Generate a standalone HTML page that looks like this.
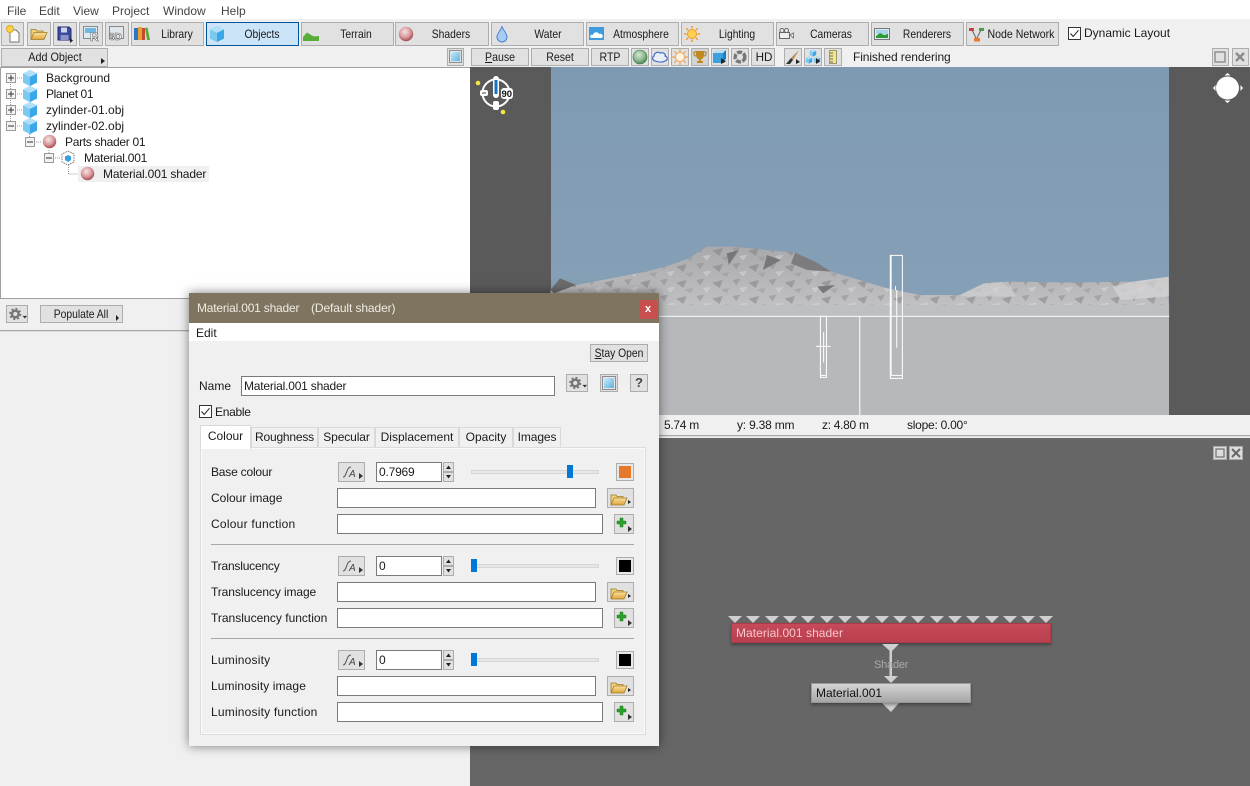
<!DOCTYPE html>
<html><head><meta charset="utf-8"><title>Terragen</title>
<style>
html,body{margin:0;padding:0;width:1250px;height:786px;overflow:hidden;background:#f0f0f0}
body{position:relative;font:12px "Liberation Sans",sans-serif;color:#1a1a1a}
.a,.t,.b,.i,.w{position:absolute;box-sizing:border-box}
.t{white-space:nowrap;line-height:16px}
.c{position:absolute;white-space:nowrap;line-height:16px;transform:translateX(-50%) scaleX(.86)}
.b{background:#e1e1e1;border:1px solid #adadad;text-align:center;white-space:nowrap;line-height:18px}
.tb{top:22px;height:24px;line-height:22px}
.w{background:#fff;border:1px solid #7a7a7a;line-height:18px;padding-left:2px;white-space:nowrap}
.i{overflow:visible}
.ar{position:absolute;width:0;height:0;border-left:4px solid #222;border-top:3px solid transparent;border-bottom:3px solid transparent}
.tab{position:absolute;top:427px;height:20px;box-sizing:border-box;background:#f0f0f0;border:1px solid #d9d9d9;border-bottom:0;text-align:center;line-height:19px}
.tri{position:absolute;top:616px;width:0;height:0;border-left:7px solid transparent;border-right:7px solid transparent;border-top:7px solid #cfcfcf}
</style></head><body>
<svg width="0" height="0" style="position:absolute">
<defs>
<radialGradient id="rs" cx=".42" cy=".35" r=".7"><stop offset="0" stop-color="#f6e4e4"/><stop offset=".55" stop-color="#d99a9c"/><stop offset="1" stop-color="#9c3f44"/></radialGradient>
<radialGradient id="gr" cx=".42" cy=".35" r=".7"><stop offset="0" stop-color="#d5e8d5"/><stop offset=".6" stop-color="#8ab58d"/><stop offset="1" stop-color="#3e7a45"/></radialGradient>
<linearGradient id="gs" x1="0" y1="0" x2="1" y2="1"><stop offset="0" stop-color="#c9eafa"/><stop offset="1" stop-color="#5fb2e0"/></linearGradient>
<linearGradient id="fo" x1="0" y1="0" x2="0" y2="1"><stop offset="0" stop-color="#fbe3a0"/><stop offset="1" stop-color="#dda436"/></linearGradient>
<linearGradient id="mt" gradientUnits="userSpaceOnUse" x1="0" y1="50" x2="0" y2="258"><stop offset="0" stop-color="#a9a9ab"/><stop offset=".55" stop-color="#b8b8ba"/><stop offset="1" stop-color="#c4c5c7"/></linearGradient>
<pattern id="tx" patternUnits="userSpaceOnUse" width="90" height="48">
<path d="M4 6L24 2L14 22Z" fill="#8a8a8c" opacity=".5"/><path d="M44 14L70 6L62 30Z" fill="#77777a" opacity=".45"/><path d="M20 30L42 26L30 44Z" fill="#dadadc" opacity=".5"/><path d="M66 34L86 30L80 46Z" fill="#8e8e90" opacity=".4"/>
</pattern>
<symbol id="cube" viewBox="0 0 16 18"><path d="M8 1L15 4.500V13.500L8 17L1 13.500V4.500Z" fill="#5bb6ea"/><path d="M8 1L15 4.500L8 8L1 4.500Z" fill="#aee0f7"/><path d="M1 4.500L8 8V17L1 13.500Z" fill="#7cc9f0"/><path d="M8 8L15 4.500V13.500L8 17Z" fill="#3aa8e8"/></symbol>
<symbol id="sph" viewBox="0 0 16 16"><circle cx="8" cy="8" r="7.200" fill="url(#rs)"/></symbol>
<symbol id="folder" viewBox="0 0 18 14"><path d="M1 13V3H6L7 4.500H13V6" fill="#f2d27a" stroke="#9a7a2c" stroke-width=".8"/><path d="M1 13L4 6H17L14 13Z" fill="url(#fo)" stroke="#a07c28" stroke-width=".8"/></symbol>
<symbol id="prev" viewBox="0 0 14 14"><rect x=".5" y=".5" width="13" height="13" fill="#e8e8e8" stroke="#8a8a8a"/><rect x="2" y="2" width="10" height="10" fill="url(#gs)"/></symbol>
<symbol id="gear" viewBox="0 0 22 14"><circle cx="8" cy="7" r="3.700" fill="none" stroke="#757575" stroke-width="2.600"/><circle cx="8" cy="7" r="5.700" fill="none" stroke="#757575" stroke-width="2" stroke-dasharray="2.200 2.280"/><path d="M16 9h5l-2.500 3z" fill="#333"/></symbol>
<symbol id="fn" viewBox="0 0 27 20"><path d="M5 15C9 15 8 5 13 5" fill="none" stroke="#555" stroke-width="1"/><text x="11" y="15" font-family="Liberation Sans" font-style="italic" font-size="10" fill="#444">A</text><path d="M21 11l4 3-4 3z" fill="#333"/></symbol>
<symbol id="plus" viewBox="0 0 20 20"><path d="M6 4h3v3h3v3H9v3H6v-3H3V7h3z" fill="#2aa02a" stroke="#1b7d1b" stroke-width=".5"/><path d="M14 12l4 3-4 3z" fill="#333"/></symbol>
</defs></svg>

<!-- menu -->
<div class="a" style="left:0;top:0;width:1250px;height:19px;background:#fff"></div>
<div class="t" style="left:7px;top:3px;color:#444">File</div>
<div class="t" style="left:39px;top:3px;color:#444">Edit</div>
<div class="t" style="left:73px;top:3px;color:#444">View</div>
<div class="t" style="left:112px;top:3px;color:#444">Project</div>
<div class="t" style="left:163px;top:3px;color:#444">Window</div>
<div class="t" style="left:221px;top:3px;color:#444">Help</div>

<!-- toolbar -->
<div class="a" style="left:0;top:19px;width:1250px;height:49px;background:#f0f0f0"></div>
<div class="b tb" style="left:1px;width:23px"></div>
<svg class="i" style="left:5px;top:24px" width="16" height="20" viewBox="0 0 16 20"><path d="M5 6h6l3 3v9H5z" fill="#fff" stroke="#777"/><circle cx="5" cy="5" r="3.500" fill="#f8d64a" stroke="#e8a020"/></svg>
<div class="b tb" style="left:27px;width:24px"></div>
<svg class="i" style="left:30px;top:26px" width="18" height="15"><use href="#folder"/></svg>
<div class="b tb" style="left:53px;width:24px"></div>
<svg class="i" style="left:57px;top:26px" width="17" height="17" viewBox="0 0 17 17"><path d="M1 1h11l2 2v11H1z" fill="#3a4a9e" stroke="#232c6e"/><rect x="4" y="1.500" width="6" height="5" fill="#cfd4ee"/><rect x="3.500" y="9" width="8" height="5" fill="#8c93c8"/><path d="M13 12l3 2.500-3 2.500z" fill="#222"/></svg>
<div class="b tb" style="left:79px;width:24px"></div>
<svg class="i" style="left:83px;top:26px" width="17" height="16" viewBox="0 0 17 16"><rect x=".5" y=".5" width="14" height="12" fill="#dfeaf3" stroke="#8a8a8a"/><rect x="2" y="2" width="11" height="5" fill="#6eb7e2"/><text x="7" y="15" font-family="Liberation Sans" font-weight="bold" font-size="12" fill="#fff" stroke="#666" stroke-width=".6">R</text></svg>
<div class="b tb" style="left:105px;width:24px"></div>
<svg class="i" style="left:108px;top:26px" width="18" height="16" viewBox="0 0 18 16"><rect x="1.500" y=".5" width="14" height="12" fill="#dfe6ec" stroke="#8a8a8a"/><text x="1" y="14" font-family="Liberation Sans" font-weight="bold" font-size="10" fill="#fff" stroke="#666" stroke-width=".6">3D</text></svg>
<div class="b tb" style="left:131px;width:73px"></div><div class="c" style="left:177px;top:26px">Library</div>
<svg class="i" style="left:134px;top:26px" width="16" height="16" viewBox="0 0 16 16"><rect x="0" y="2" width="4" height="12" fill="#2e74c0"/><rect x="4" y="1" width="4" height="13" fill="#e8a030"/><rect x="8" y="2" width="3" height="12" fill="#c84830"/><path d="M11 2l2.500-.5L16 14h-3z" fill="#58a838"/></svg>
<div class="b tb" style="left:206px;width:93px;background:#cce4f7;border-color:#005499"></div><div class="c" style="left:261.500px;top:26px">Objects</div>
<svg class="i" style="left:209px;top:25px" width="16" height="18"><use href="#cube"/></svg>
<div class="b tb" style="left:301px;width:93px"></div><div class="c" style="left:356px;top:26px">Terrain</div>
<svg class="i" style="left:303px;top:30px" width="16" height="12" viewBox="0 0 16 12"><path d="M0 7L4 2.500L8 5L11 6.500L16 6V11H0Z" fill="#58ac3a"/></svg>
<div class="b tb" style="left:395px;width:94px"></div><div class="c" style="left:451px;top:26px">Shaders</div>
<svg class="i" style="left:398px;top:26px" width="16" height="16"><use href="#sph"/></svg>
<div class="b tb" style="left:491px;width:93px"></div><div class="c" style="left:547.500px;top:26px">Water</div>
<svg class="i" style="left:496px;top:25px" width="12" height="18" viewBox="0 0 12 18"><path d="M6 1C6 4 1 8 1 12a5 5 0 0 0 10 0C11 8 6 4 6 1Z" fill="#a9cdf2" stroke="#4a80d0"/></svg>
<div class="b tb" style="left:586px;width:93px"></div><div class="c" style="left:640.500px;top:26px">Atmosphere</div>
<svg class="i" style="left:589px;top:27px" width="15" height="13" viewBox="0 0 15 13"><rect width="15" height="13" fill="#3f9be0"/><path d="M2 11c-2-2 0-4 2-3 0-3 5-4 6-1 3-1 5 2 3 4z" fill="#fff"/></svg>
<div class="b tb" style="left:681px;width:93px"></div><div class="c" style="left:737px;top:26px">Lighting</div>
<svg class="i" style="left:684px;top:26px" width="16" height="16" viewBox="0 0 16 16"><circle cx="8" cy="8" r="4.500" fill="#fbd055" stroke="#f09a30"/><path d="M8 0v2.500M8 13.500V16M0 8h2.500M13.500 8H16M2.300 2.300l1.800 1.800M11.900 11.900l1.800 1.800M2.300 13.700l1.800-1.800M11.900 4.100l1.800-1.800" stroke="#f09a30" stroke-width="1.500"/></svg>
<div class="b tb" style="left:776px;width:93px"></div><div class="c" style="left:831px;top:26px">Cameras</div>
<svg class="i" style="left:779px;top:28px" width="15" height="11" viewBox="0 0 15 11"><rect x=".5" y="4.500" width="10" height="6" fill="#eee" stroke="#666"/><circle cx="3" cy="2.500" r="2" fill="#eee" stroke="#666"/><circle cx="7.500" cy="2.500" r="2" fill="#eee" stroke="#666"/><path d="M11 7l3.500-2v5z" fill="#eee" stroke="#666" stroke-width=".8"/></svg>
<div class="b tb" style="left:871px;width:93px"></div><div class="c" style="left:927px;top:26px">Renderers</div>
<svg class="i" style="left:874px;top:28px" width="16" height="12" viewBox="0 0 16 12"><rect x=".5" y=".5" width="15" height="11" fill="#d9ecf5" stroke="#777"/><rect x="2" y="2" width="12" height="4" fill="#a8d4ea"/><path d="M2 8L6 5L10 7L14 6V10H2Z" fill="#2e9a34"/></svg>
<div class="b tb" style="left:966px;width:93px"></div><div class="c" style="left:1021px;top:26px;transform:translateX(-50%) scaleX(.88)">Node Network</div>
<svg class="i" style="left:969px;top:27px" width="15" height="15" viewBox="0 0 15 15"><path d="M3 3L7 11M12 3L8 11" stroke="#666"/><rect x="0" y="1" width="5" height="3" fill="#c84040"/><rect x="10" y="1" width="5" height="3" fill="#4a9a4a"/><rect x="5" y="11" width="6" height="3.500" fill="#e87a30"/></svg>
<div class="a" style="left:1068px;top:27px;width:13px;height:13px;border:1px solid #333;background:#fff;box-sizing:border-box"></div>
<svg class="i" style="left:1068px;top:27px" width="13" height="13"><path d="M2.500 6.500L5.200 9.500L10.500 3.200" fill="none" stroke="#222"/></svg>
<div class="t" style="left:1084px;top:25px">Dynamic Layout</div>

<!-- row 2 -->
<div class="b" style="left:1px;top:48px;width:107px;height:19px"></div><div class="c" style="left:54.500px;top:49px;transform:translateX(-50%) scaleX(.9)">Add Object</div>
<div class="ar" style="left:101px;top:58px"></div>
<div class="b" style="left:447px;top:48px;width:17px;height:18px"></div>
<svg class="i" style="left:449px;top:50px" width="13" height="13"><use href="#prev"/></svg>
<div class="b" style="left:471px;top:48px;width:58px;height:18px"></div><div class="c" style="left:500px;top:49px;transform:translateX(-50%) scaleX(.88)"><u>P</u>ause</div>
<div class="b" style="left:531px;top:48px;width:58px;height:18px"></div><div class="c" style="left:560px;top:49px;transform:translateX(-50%) scaleX(.88)">Reset</div>
<div class="b" style="left:591px;top:48px;width:38px;height:18px"></div><div class="c" style="left:610px;top:49px;transform:translateX(-50%) scaleX(.88)">RTP</div>
<div class="b" style="left:631px;top:48px;width:18px;height:18px"></div>
<svg class="i" style="left:632px;top:49px" width="16" height="16"><circle cx="8" cy="8" r="7" fill="url(#gr)" stroke="#3b7a46" stroke-width=".6"/></svg>
<div class="b" style="left:651px;top:48px;width:18px;height:18px"></div>
<svg class="i" style="left:652px;top:50px" width="16" height="14" viewBox="0 0 16 14"><path d="M3 11C0 10 0 7 2 6C2 3 6 1 8 3C11 2 14 4 13 6C16 7 16 10 13 11C10 13 6 12 3 11Z" fill="#e8eefa" stroke="#3a60c8" stroke-width="1.100"/></svg>
<div class="b" style="left:671px;top:48px;width:18px;height:18px"></div>
<svg class="i" style="left:672px;top:49px" width="16" height="16" viewBox="0 0 16 16"><circle cx="8" cy="8" r="4.500" fill="#fff3e4" stroke="#f0a050"/><path d="M8 0v3M8 13v3M0 8h3M13 8h3M2.300 2.300l2 2M11.700 11.700l2 2M2.300 13.700l2-2M11.700 4.300l2-2" stroke="#f0a050" stroke-width="1.200"/></svg>
<div class="b" style="left:691px;top:48px;width:18px;height:18px;background:#d4d4d4"></div>
<svg class="i" style="left:693px;top:50px" width="14" height="14" viewBox="0 0 14 14"><path d="M3 1h8v4c0 3-2 4-3 4.500V11h2v2H4v-2h2V9.500C5 9 3 8 3 5z" fill="#c08a20"/><path d="M3 2H1v2c0 1 1 2 2 2M11 2h2v2c0 1-1 2-2 2" fill="none" stroke="#a87818"/></svg>
<div class="b" style="left:711px;top:48px;width:18px;height:18px"></div>
<svg class="i" style="left:712px;top:49px" width="15" height="15" viewBox="0 0 15 15"><rect x="1" y="4" width="10" height="10" fill="#3aa0e0"/><path d="M1 4l3-3h10l-3 3z" fill="#b6e0f6"/><path d="M11 4l3-3v9l-3 3z" fill="#1e7cc0"/><path d="M9 9l5 3.500-5 2.500z" fill="#222"/></svg>
<div class="b" style="left:731px;top:48px;width:18px;height:18px"></div>
<svg class="i" style="left:733px;top:50px" width="14" height="14" viewBox="0 0 14 14"><circle cx="7" cy="7" r="4.800" fill="none" stroke="#777" stroke-width="3.400" stroke-dasharray="5 1.500"/></svg>
<div class="b" style="left:751px;top:48px;width:24px;height:18px"></div><div class="c" style="left:763.500px;top:49px;transform:translateX(-50%) scaleX(.97)">HD</div>
<div class="b" style="left:784px;top:48px;width:18px;height:18px"></div>
<svg class="i" style="left:785px;top:49px" width="16" height="16" viewBox="0 0 16 16"><path d="M14 1L6 9l2 2z" fill="#b88a50"/><path d="M6 9l2 2-3 4-4 0z" fill="#333"/><path d="M11 10l4 3-4 2z" fill="#222"/></svg>
<div class="b" style="left:804px;top:48px;width:18px;height:18px"></div>
<svg class="i" style="left:805px;top:49px" width="16" height="16"><use href="#cube" x="4" y="0" width="8" height="8"/><use href="#cube" x="0" y="7" width="8" height="8"/><use href="#cube" x="8" y="7" width="8" height="8"/><path d="M11 9l4 3-4 3z" fill="#222"/></svg>
<div class="b" style="left:824px;top:48px;width:18px;height:18px"></div>
<svg class="i" style="left:829px;top:50px" width="8" height="14" viewBox="0 0 8 14"><rect x=".5" y=".5" width="7" height="13" fill="#f4e58a" stroke="#9a9a70"/><path d="M1 3h3M1 6h3M1 9h3M1 12h3" stroke="#666"/></svg>
<div class="t" style="left:853px;top:49px;letter-spacing:-.1px">Finished rendering</div>
<div class="b" style="left:1212px;top:48px;width:17px;height:18px"></div>
<svg class="i" style="left:1214px;top:51px" width="12" height="12"><rect x="1" y="1" width="10" height="10" fill="none" stroke="#8a8a8a" stroke-width="1.400"/></svg>
<div class="b" style="left:1232px;top:48px;width:17px;height:18px"></div>
<svg class="i" style="left:1234px;top:51px" width="12" height="12"><path d="M2 2L10 10M10 2L2 10" stroke="#8a8a8a" stroke-width="2.400"/></svg>

<!-- tree -->
<div class="a" style="left:0;top:67px;width:470px;height:232px;background:#fff;border:1px solid #a0a0a0;border-right:0;box-sizing:border-box"></div>
<svg class="i" style="left:0;top:68px" width="100" height="110">
<path d="M10.500 16V58M15 10H22M15 26H22M15 42H22M15 58H22M29.500 66V74M34 74H42M49 82V90M53 90H61M68.500 97V106M68.500 106H80" stroke="#999" stroke-dasharray="1 1" fill="none"/>
</svg>
<svg class="i" style="left:6px;top:73px" width="50" height="70" fill="#f2f2f2" stroke="#999">
<rect x=".5" y=".5" width="9" height="9"/><path d="M2 5H8M5 2V8" stroke="#333"/>
<rect x=".5" y="16.500" width="9" height="9"/><path d="M2 21H8M5 18V24" stroke="#333"/>
<rect x=".5" y="32.500" width="9" height="9"/><path d="M2 37H8M5 34V40" stroke="#333"/>
<rect x=".5" y="48.500" width="9" height="9"/><path d="M2 53H8" stroke="#333"/>
<rect x="19.500" y="64.500" width="9" height="9"/><path d="M21 69H27" stroke="#333"/>
<rect x="38.500" y="80.500" width="9" height="9"/><path d="M40 85H46" stroke="#333"/>
</svg>
<svg class="i" style="left:22px;top:69px" width="16" height="18"><use href="#cube"/></svg>
<svg class="i" style="left:22px;top:85px" width="16" height="18"><use href="#cube"/></svg>
<svg class="i" style="left:22px;top:101px" width="16" height="18"><use href="#cube"/></svg>
<svg class="i" style="left:22px;top:117px" width="16" height="18"><use href="#cube"/></svg>
<svg class="i" style="left:42px;top:134px" width="15" height="15"><use href="#sph"/></svg>
<svg class="i" style="left:61px;top:150px" width="14" height="16" viewBox="0 0 14 16"><path d="M7 1L13 4V12L7 15L1 12V4Z" fill="#fff" stroke="#777" stroke-dasharray="1.500 1"/><path d="M7 5L10 6.500V10L7 12L4 10V6.500Z" fill="#36a0de"/></svg>
<div class="a" style="left:78px;top:166px;width:131px;height:16px;background:#f0f0f0"></div>
<svg class="i" style="left:80px;top:166px" width="15" height="15"><use href="#sph"/></svg>
<div class="t" style="left:46px;top:70px">Background</div>
<div class="t" style="left:46px;top:86px;letter-spacing:-.4px">Planet 01</div>
<div class="t" style="left:46px;top:102px">zylinder-01.obj</div>
<div class="t" style="left:46px;top:118px">zylinder-02.obj</div>
<div class="t" style="left:65px;top:134px;letter-spacing:-.3px">Parts shader 01</div>
<div class="t" style="left:84px;top:150px;letter-spacing:-.25px">Material.001</div>
<div class="t" style="left:103px;top:166px;letter-spacing:-.15px">Material.001 shader</div>

<!-- left bottom -->
<div class="b" style="left:6px;top:305px;width:22px;height:18px"></div>
<svg class="i" style="left:8px;top:307px" width="20" height="14"><use href="#gear"/></svg>
<div class="b" style="left:40px;top:305px;width:83px;height:18px"></div><div class="c" style="left:80.500px;top:306px">Populate All</div>
<div class="ar" style="left:116px;top:315px;border-left-width:3px"></div>
<div class="a" style="left:0;top:330px;width:470px;height:2px;border-top:1px solid #a8a8a8;border-bottom:1px solid #dcdcdc;box-sizing:border-box"></div>

<!-- viewport -->
<div class="a" style="left:470px;top:67px;width:780px;height:348px;background:#5a5a5a"></div>
<div class="a" style="left:551px;top:67px;width:618px;height:250px;background:linear-gradient(#7e9ab3,#86a0b6)"></div>
<div class="a" style="left:551px;top:317px;width:618px;height:98px;background:#b7b8bc"></div>
<svg class="i" style="left:550px;top:230px" width="630" height="220" viewBox="0 0 1568 660" preserveAspectRatio="none">
<path d="M1 180L25 150L65 165L130 150L240 125L300 105L345 85L390 50L460 50L540 60L610 68L660 95L700 125L770 150L840 175L920 195L1020 195L1080 160L1140 155L1300 158L1450 155L1540 140V258H1V180Z" fill="url(#mt)"/>
<path d="M1 180L25 150L65 165L130 150L240 125L300 105L345 85L390 50L460 50L540 60L610 68L660 95L700 125L770 150L840 175L920 195L1020 195L1080 160L1140 155L1300 158L1450 155L1540 140V225H1V180Z" fill="url(#tx)"/>
<path d="M1 180L25 145L65 165L10 190Z" fill="#6c6c6c"/>
<path d="M610 68L660 95L700 125L640 120L600 100Z" fill="#7c7c7e"/>
<path d="M540 75L575 90L530 120Z" fill="#77777a"/>
<path d="M440 70L470 60L445 105Z" fill="#77777a"/>
<path d="M665 170L710 165L680 190Z" fill="#77777a"/>
<path d="M1020 195L1080 160L1140 155L1160 200H1040Z" fill="#d2d2d4" opacity=".6"/>
<path d="M1400 170L1450 155L1540 140V200L1420 210Z" fill="#d5d5d7" opacity=".7"/>
<rect x="1" y="225" width="1540" height="33" fill="#bcbdbf" opacity=".75"/>
<g fill="none" stroke="#fff" stroke-width="1">
<path vector-effect="non-scaling-stroke" d="M0 259H1541M771 259V555"/>
<rect vector-effect="non-scaling-stroke" x="673" y="259" width="15" height="183"/><path vector-effect="non-scaling-stroke" d="M673 436H688M681 306V398M662 349H698"/>
<rect vector-effect="non-scaling-stroke" x="847" y="76" width="30" height="369"/><path vector-effect="non-scaling-stroke" d="M849 76V436H877M860 168V180M863 180V353"/>
</g></svg>
<!-- compass left -->
<svg class="i" style="left:476px;top:76px" width="40" height="40" viewBox="0 0 40 40">
<circle cx="2" cy="7" r="2.300" fill="#f4e542"/><circle cx="27" cy="36" r="2.300" fill="#f4e542"/>
<circle cx="20" cy="17" r="13.500" fill="none" stroke="#fff" stroke-width="2"/>
<path d="M20 3V19" stroke="#fff" stroke-width="6" stroke-linecap="round"/><path d="M20 4V18" stroke="#1673c4" stroke-width="3"/>
<rect x="17" y="25" width="6" height="9" rx="2" fill="#fff"/><rect x="4" y="14" width="8" height="6" rx="2" fill="#fff"/><path d="M6 17H10" stroke="#444"/>
<rect x="25" y="12" width="12" height="11" rx="3" fill="#fff"/>
<text x="25.500" y="21" font-family="Liberation Sans" font-size="9.500" font-weight="bold" fill="#111">90</text></svg>
<!-- compass right -->
<svg class="i" style="left:1213px;top:73px" width="30" height="30" viewBox="0 0 30 30"><circle cx="14.500" cy="15" r="11.500" fill="#fff"/><path d="M14.500 0l3 2.500h-6zM14.500 30l3-2.500h-6zM0 15l2.500-3v6zM30 15l-2.500-3v6z" fill="#fff"/></svg>

<!-- status -->
<div class="a" style="left:470px;top:415px;width:780px;height:23px;background:#f0f0f0"></div>
<div class="a" style="left:470px;top:435px;width:780px;height:2px;border-top:1px solid #a8a8a8;border-bottom:1px solid #dcdcdc;box-sizing:border-box"></div>
<div class="t" style="left:664px;top:417px;letter-spacing:-.3px">5.74 m</div>
<div class="t" style="left:737px;top:417px;letter-spacing:-.2px">y: 9.38 mm</div>
<div class="t" style="left:822px;top:417px;letter-spacing:-.3px">z: 4.80 m</div>
<div class="t" style="left:907px;top:417px;letter-spacing:-.25px">slope: 0.00°</div>

<!-- node panel -->
<div class="a" style="left:470px;top:438px;width:780px;height:348px;background:#666"></div>
<div class="a" style="left:1213px;top:446px;width:14px;height:14px;background:#ddd;border:1px solid #aaa;box-sizing:border-box"></div>
<svg class="i" style="left:1215px;top:448px" width="10" height="10"><rect x="1" y="1" width="8" height="8" fill="none" stroke="#777" stroke-width="1.300"/></svg>
<div class="a" style="left:1229px;top:446px;width:14px;height:14px;background:#ddd;border:1px solid #aaa;box-sizing:border-box"></div>
<svg class="i" style="left:1231px;top:448px" width="10" height="10"><path d="M1 1L9 9M9 1L1 9" stroke="#666" stroke-width="2"/></svg>

<div class="tri" style="left:728px"></div><div class="tri" style="left:746px"></div><div class="tri" style="left:765px"></div><div class="tri" style="left:783px"></div><div class="tri" style="left:801px"></div><div class="tri" style="left:820px"></div><div class="tri" style="left:838px"></div><div class="tri" style="left:856px"></div><div class="tri" style="left:875px"></div><div class="tri" style="left:893px"></div><div class="tri" style="left:911px"></div><div class="tri" style="left:930px"></div><div class="tri" style="left:948px"></div><div class="tri" style="left:966px"></div><div class="tri" style="left:985px"></div><div class="tri" style="left:1003px"></div><div class="tri" style="left:1021px"></div><div class="tri" style="left:1039px"></div>
<div class="a" style="left:731px;top:623px;width:320px;height:20px;background:linear-gradient(#c64a59,#b9404e);border:1px solid #a83c48;box-sizing:border-box;box-shadow:0 2px 3px rgba(0,0,0,.35)"></div>
<div class="t" style="left:736px;top:625px;color:#f6c8cc;font-size:12px;letter-spacing:.05px">Material.001 shader</div>
<svg class="i" style="left:881px;top:643px" width="20" height="72" viewBox="0 0 20 72">
<path d="M1 1H18L10 9Z" fill="#cfcfcf"/><rect x="8.500" y="8" width="2.500" height="27" fill="#cfcfcf"/><path d="M3 33H17L10 40Z" fill="#cfcfcf"/><path d="M1 60H18L10 69Z" fill="#cfcfcf"/></svg>
<div class="t" style="left:874px;top:657px;color:#aaa;font-size:11px;letter-spacing:-.2px">Shader</div>
<div class="a" style="left:811px;top:683px;width:160px;height:20px;background:linear-gradient(#d4d4d4,#a6a6a6);border:1px solid #999;box-sizing:border-box;box-shadow:0 2px 3px rgba(0,0,0,.35)"></div>
<div class="t" style="left:816px;top:685px;color:#111">Material.001</div>

<!-- dialog -->
<div class="a" style="left:189px;top:293px;width:470px;height:453px;background:#f0f0f0;box-shadow:0 0 10px rgba(0,0,0,.5)"></div>
<div class="a" style="left:189px;top:293px;width:470px;height:30px;background:#7f745f"></div>
<div class="t" style="left:197px;top:300px;color:#f0ece4;letter-spacing:-.2px">Material.001 shader</div>
<div class="t" style="left:311px;top:300px;color:#f0ece4;letter-spacing:-.1px">(Default shader)</div>
<div class="a" style="left:639px;top:300px;width:18px;height:19px;background:#c84f50;color:#fff;text-align:center;line-height:18px;font-weight:bold;font-size:11px">x</div>
<div class="a" style="left:189px;top:323px;width:470px;height:18px;background:#fff"></div>
<div class="t" style="left:196px;top:325px">Edit</div>
<div class="b" style="left:590px;top:344px;width:58px;height:18px"></div><div class="c" style="left:619px;top:345px"><u>S</u>tay Open</div>
<div class="t" style="left:199px;top:378px">Name</div>
<div class="w" style="left:241px;top:376px;width:314px;height:20px;letter-spacing:-.2px">Material.001 shader</div>
<div class="b" style="left:566px;top:374px;width:22px;height:18px"></div>
<svg class="i" style="left:568px;top:376px" width="20" height="14"><use href="#gear"/></svg>
<div class="b" style="left:600px;top:374px;width:18px;height:18px"></div>
<svg class="i" style="left:602px;top:376px" width="14" height="14"><use href="#prev"/></svg>
<div class="b" style="left:630px;top:374px;width:18px;height:18px;font-weight:bold;line-height:16px;font-size:13px;color:#444">?</div>
<div class="a" style="left:199px;top:405px;width:13px;height:13px;border:1px solid #333;background:#fff;box-sizing:border-box"></div>
<svg class="i" style="left:199px;top:405px" width="13" height="13"><path d="M2.500 6.500L5.200 9.500L10.500 3.200" fill="none" stroke="#222"/></svg>
<div class="t" style="left:215px;top:404px;letter-spacing:-.3px">Enable</div>

<div class="a" style="left:200px;top:447px;width:446px;height:288px;border:1px solid #dcdcdc;box-shadow:inset 0 0 0 1px #fafafa;box-sizing:border-box"></div>
<div class="tab" style="left:251px;width:67px;letter-spacing:-.2px">Roughness</div>
<div class="tab" style="left:318px;width:57px;letter-spacing:-.1px">Specular</div>
<div class="tab" style="left:375px;width:84px">Displacement</div>
<div class="tab" style="left:459px;width:54px">Opacity</div>
<div class="tab" style="left:513px;width:48px;letter-spacing:-.1px">Images</div>
<div class="a" style="left:200px;top:425px;width:51px;height:24px;background:#fff;border:1px solid #d9d9d9;border-bottom:0;box-sizing:border-box;text-align:center;line-height:20px">Colour</div>

<div class="t" style="left:211px;top:464px;letter-spacing:-.2px">Base colour</div>
<div class="b" style="left:338px;top:462px;width:27px;height:20px"></div>
<svg class="i" style="left:338px;top:462px" width="27" height="20"><use href="#fn"/></svg>
<div class="w" style="left:376px;top:462px;width:66px;height:20px;letter-spacing:-.2px">0.7969</div>
<div class="b" style="left:443px;top:462px;width:11px;height:10px"></div><div class="b" style="left:443px;top:472px;width:11px;height:10px"></div>
<svg class="i" style="left:443px;top:462px" width="11" height="20"><path d="M3 7L5.500 3.500L8 7ZM3 13L5.500 16.500L8 13Z" fill="#222"/></svg>
<div class="a" style="left:471px;top:470px;width:128px;height:4px;background:#e7e7e7;border:1px solid #d6d6d6;box-sizing:border-box"></div>
<div class="a" style="left:567px;top:465px;width:6px;height:13px;background:#0078d7"></div>
<div class="b" style="left:616px;top:463px;width:18px;height:18px;background:#e5782a;outline:2px solid #e8e8e8;outline-offset:-3px"></div>
<div class="t" style="left:211px;top:490px">Colour image</div>
<div class="w" style="left:337px;top:488px;width:259px;height:20px"></div>
<div class="b" style="left:607px;top:488px;width:27px;height:20px"></div>
<svg class="i" style="left:610px;top:492px" width="18" height="14"><use href="#folder"/></svg><div class="ar" style="left:628px;top:500px;border-left-width:3px;border-top-width:2.500px;border-bottom-width:2.500px"></div>
<div class="t" style="left:211px;top:516px;letter-spacing:.25px">Colour function</div>
<div class="w" style="left:337px;top:514px;width:266px;height:20px"></div>
<div class="b" style="left:614px;top:514px;width:20px;height:20px"></div>
<svg class="i" style="left:614px;top:514px" width="20" height="20"><use href="#plus"/></svg>
<div class="a" style="left:211px;top:544px;width:423px;height:1px;background:#a8a8a8"></div>

<div class="t" style="left:211px;top:558px;letter-spacing:-.2px">Translucency</div>
<div class="b" style="left:338px;top:556px;width:27px;height:20px"></div>
<svg class="i" style="left:338px;top:556px" width="27" height="20"><use href="#fn"/></svg>
<div class="w" style="left:376px;top:556px;width:66px;height:20px">0</div>
<div class="b" style="left:443px;top:556px;width:11px;height:10px"></div><div class="b" style="left:443px;top:566px;width:11px;height:10px"></div>
<svg class="i" style="left:443px;top:556px" width="11" height="20"><path d="M3 7L5.500 3.500L8 7ZM3 13L5.500 16.500L8 13Z" fill="#222"/></svg>
<div class="a" style="left:471px;top:564px;width:128px;height:4px;background:#e7e7e7;border:1px solid #d6d6d6;box-sizing:border-box"></div>
<div class="a" style="left:471px;top:559px;width:6px;height:13px;background:#0078d7"></div>
<div class="b" style="left:616px;top:557px;width:18px;height:18px;background:#000;outline:2px solid #e8e8e8;outline-offset:-3px"></div>
<div class="t" style="left:211px;top:584px;letter-spacing:-.1px">Translucency image</div>
<div class="w" style="left:337px;top:582px;width:259px;height:20px"></div>
<div class="b" style="left:607px;top:582px;width:27px;height:20px"></div>
<svg class="i" style="left:610px;top:586px" width="18" height="14"><use href="#folder"/></svg><div class="ar" style="left:628px;top:594px;border-left-width:3px;border-top-width:2.500px;border-bottom-width:2.500px"></div>
<div class="t" style="left:211px;top:610px">Translucency function</div>
<div class="w" style="left:337px;top:608px;width:266px;height:20px"></div>
<div class="b" style="left:614px;top:608px;width:20px;height:20px"></div>
<svg class="i" style="left:614px;top:608px" width="20" height="20"><use href="#plus"/></svg>
<div class="a" style="left:211px;top:638px;width:423px;height:1px;background:#a8a8a8"></div>

<div class="t" style="left:211px;top:652px;letter-spacing:.2px">Luminosity</div>
<div class="b" style="left:338px;top:650px;width:27px;height:20px"></div>
<svg class="i" style="left:338px;top:650px" width="27" height="20"><use href="#fn"/></svg>
<div class="w" style="left:376px;top:650px;width:66px;height:20px">0</div>
<div class="b" style="left:443px;top:650px;width:11px;height:10px"></div><div class="b" style="left:443px;top:660px;width:11px;height:10px"></div>
<svg class="i" style="left:443px;top:650px" width="11" height="20"><path d="M3 7L5.500 3.500L8 7ZM3 13L5.500 16.500L8 13Z" fill="#222"/></svg>
<div class="a" style="left:471px;top:658px;width:128px;height:4px;background:#e7e7e7;border:1px solid #d6d6d6;box-sizing:border-box"></div>
<div class="a" style="left:471px;top:653px;width:6px;height:13px;background:#0078d7"></div>
<div class="b" style="left:616px;top:651px;width:18px;height:18px;background:#000;outline:2px solid #e8e8e8;outline-offset:-3px"></div>
<div class="t" style="left:211px;top:678px;letter-spacing:.1px">Luminosity image</div>
<div class="w" style="left:337px;top:676px;width:259px;height:20px"></div>
<div class="b" style="left:607px;top:676px;width:27px;height:20px"></div>
<svg class="i" style="left:610px;top:680px" width="18" height="14"><use href="#folder"/></svg><div class="ar" style="left:628px;top:688px;border-left-width:3px;border-top-width:2.500px;border-bottom-width:2.500px"></div>
<div class="t" style="left:211px;top:704px;letter-spacing:.2px">Luminosity function</div>
<div class="w" style="left:337px;top:702px;width:266px;height:20px"></div>
<div class="b" style="left:614px;top:702px;width:20px;height:20px"></div>
<svg class="i" style="left:614px;top:702px" width="20" height="20"><use href="#plus"/></svg>
</body></html>
